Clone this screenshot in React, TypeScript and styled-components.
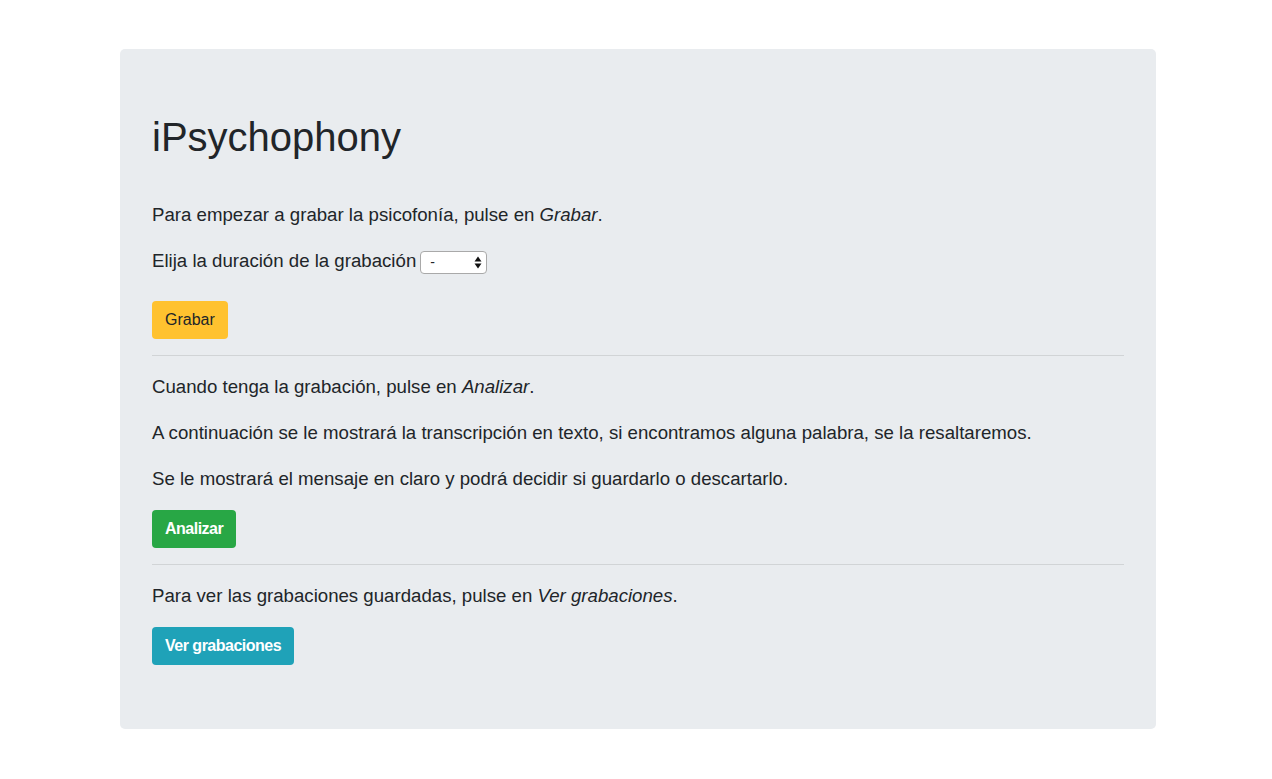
import React from "react";
import styled, { createGlobalStyle } from "styled-components";

const GlobalStyle = createGlobalStyle`
    html, body {
        margin: 0;
        padding: 0;
        background: #ffffff;
    }
    body {
        font-family: "Liberation Sans", Arial, sans-serif;
        color: #212529;
        font-size: 16px;
        line-height: 1.5;
    }
`;

const Page = styled.div`
    padding: 49px 116px 50px 120px;
`;

const Jumbotron = styled.section`
    background-color: #e9ecef;
    border-radius: 5px;
    padding: 64px 32px;
`;

const Title = styled.h1`
    margin: 0 0 39px;
    font-size: 40px;
    font-weight: 500;
    line-height: 48px;
`;

const Lead = styled.p<{ $extra?: number }>`
    margin: 0 0 ${(p) => 16 + (p.$extra ?? 0)}px;
    font-size: 18.65px;
    line-height: 30px;
    font-weight: 400;
`;

const Divider = styled.hr`
    margin: 16px 0;
    border: 0;
    border-top: 1px solid rgba(0, 0, 0, 0.1);
`;

const Button = styled.button<{ $variant: "warning" | "success" | "info" }>`
    display: inline-block;
    font-family: inherit;
    font-size: 16px;
    line-height: 24px;
    padding: 6px 12px;
    border: 1px solid transparent;
    border-radius: 4px;
    cursor: pointer;
    font-weight: ${(p) => (p.$variant === "warning" ? 400 : 700)};
    letter-spacing: ${(p) => (p.$variant === "warning" ? "0" : "-0.5px")};
    color: ${(p) => (p.$variant === "warning" ? "#212529" : "#ffffff")};
    background-color: ${(p) =>
        p.$variant === "warning" ? "#ffc22f" : p.$variant === "success" ? "#28a745" : "#1fa2b8"};
`;

const SelectWrap = styled.span`
    position: relative;
    display: inline-block;
    vertical-align: middle;
    margin-left: 4px;
`;

const Select = styled.select`
    appearance: none;
    -webkit-appearance: none;
    display: block;
    width: 67px;
    height: 23px;
    padding: 0 20px 0 9px;
    font-family: "Liberation Sans", Arial, sans-serif;
    font-size: 14px;
    color: #212529;
    background: #ffffff;
    border: 1px solid #a9a9a9;
    border-radius: 4px;
`;

const Arrows = styled.svg`
    position: absolute;
    right: 5px;
    top: 5px;
    pointer-events: none;
`;

export default function App() {
    return (
        <>
            <GlobalStyle />
            <Page>
                <Jumbotron>
                    <Title>iPsychophony</Title>
                    <Lead>
                        Para empezar a grabar la psicofonía, pulse en <em>Grabar</em>.
                    </Lead>
                    <Lead $extra={9}>
                        Elija la duración de la grabación
                        <SelectWrap>
                            <Select defaultValue="-">
                                <option value="-">-</option>
                                <option value="10">10 s</option>
                                <option value="30">30 s</option>
                                <option value="60">60 s</option>
                            </Select>
                            <Arrows width="8" height="13" viewBox="0 0 8 13">
                                <path d="M4 0.5 L7.5 5.5 H0.5 Z" fill="#111" />
                                <path d="M4 12.5 L7.5 7.5 H0.5 Z" fill="#111" />
                            </Arrows>
                        </SelectWrap>
                    </Lead>
                    <Button $variant="warning">Grabar</Button>
                    <Divider />
                    <Lead>
                        Cuando tenga la grabación, pulse en <em>Analizar</em>.
                    </Lead>
                    <Lead>
                        A continuación se le mostrará la transcripción en texto, si encontramos alguna
                        palabra, se la resaltaremos.
                    </Lead>
                    <Lead>Se le mostrará el mensaje en claro y podrá decidir si guardarlo o descartarlo.</Lead>
                    <Button $variant="success">Analizar</Button>
                    <Divider />
                    <Lead>
                        Para ver las grabaciones guardadas, pulse en <em>Ver grabaciones</em>.
                    </Lead>
                    <Button $variant="info">Ver grabaciones</Button>
                </Jumbotron>
            </Page>
        </>
    );
}
